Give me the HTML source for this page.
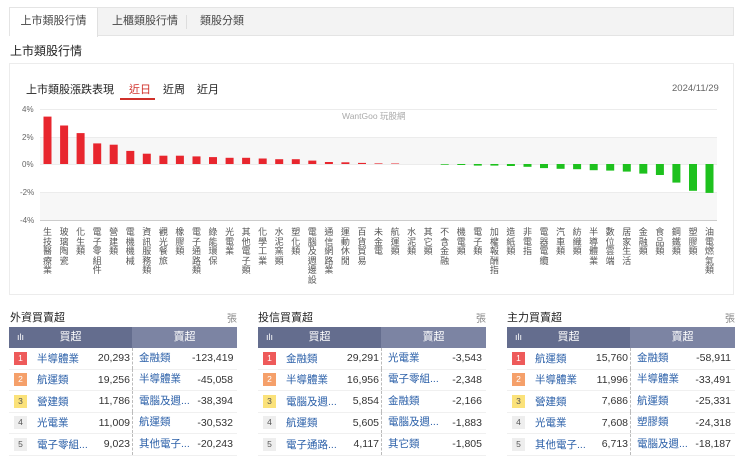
<!DOCTYPE html>
<html><head><meta charset="utf-8"><style>
*{margin:0;padding:0;box-sizing:border-box}
body{width:740px;height:463px;background:#fff;font-family:"Liberation Sans","Noto Sans CJK TC",sans-serif;color:#333;position:relative;overflow:hidden}
.abs{position:absolute}
.tabs{left:9px;top:7px;width:725px;height:29px;background:#f3f3f3;border:1px solid #e4e4e4}
.tab{position:absolute;top:0;height:28px;line-height:26px;font-size:11px;color:#444}
.t1{left:0;width:88px;background:#fff;border-right:1px solid #e0e0e0;height:29px;text-align:center}
.h1{left:10px;top:42px;font-size:12px;color:#222}
.panel{left:9px;top:63px;width:725px;height:232px;border:1px solid #ececec}
.lbl{position:absolute;top:228px;width:11px;font-size:9px;line-height:9.6px;color:#555;word-break:break-all;text-align:center}
.tt{font-size:11px;color:#222}
.tbl{position:absolute;top:327px;width:228px}
.tbl .hd{height:21px;display:flex;color:#fff;font-size:11px}
.hd .a{background:#646d8e;width:123px;text-align:center;line-height:21px;position:relative}
.hd .b{background:#7c84a3;flex:1;text-align:center;line-height:21px}
.row{height:21.5px;display:flex;align-items:center;border-bottom:1px solid #f0f0f0;font-size:10.5px}
.bd{width:13px;height:13px;font-size:8.5px;line-height:13px;text-align:center;margin-left:5px;color:#fff;flex:none}
.n1{color:#2a5fa8;margin-left:10px;width:52px;white-space:nowrap;overflow:hidden;flex:none}
.v1{width:41px;text-align:right;color:#333;flex:none}
.n2{color:#2a5fa8;margin-left:2px;width:60px;white-space:nowrap;overflow:hidden;border-left:1px dashed #bbb;padding-left:6px;height:21px;line-height:21px;flex:none}
.v2{flex:1;text-align:right;padding-right:4px;color:#333;white-space:nowrap}
.ttl{position:absolute;top:309px;font-size:11px;color:#222}
.zh{position:absolute;top:310px;font-size:10px;color:#888}
</style></head><body>
<div class="abs tabs">
<div class="tab t1">上市類股行情</div>
<div class="tab" style="left:102px">上櫃類股行情</div>
<div class="tab" style="left:176px;top:7px;height:14px;border-left:1px solid #ddd"></div>
<div class="tab" style="left:190px">類股分類</div>
</div>
<div class="abs h1">上市類股行情</div>
<div class="abs panel"></div>
<div class="abs tt" style="left:26px;top:81px">上市類股漲跌表現</div>
<div class="abs tt" style="left:129px;top:81px;color:#d0302a">近日</div>
<div class="abs" style="left:120px;top:98px;width:35px;height:2px;background:#d0302a"></div>
<div class="abs tt" style="left:163px;top:81px">近周</div>
<div class="abs tt" style="left:197px;top:81px">近月</div>
<div class="abs" style="left:672px;top:83px;font-size:9.5px;color:#666">2024/11/29</div>
<svg class="abs" style="left:0;top:0" width="740" height="300">
<rect x="40" y="137" width="677" height="27" fill="#f7f7f7"/>
<rect x="40" y="192" width="677" height="28" fill="#f7f7f7"/>
<g stroke="#ececec" stroke-width="1">
<line x1="40" y1="109.5" x2="717" y2="109.5"/><line x1="40" y1="137.5" x2="717" y2="137.5"/><line x1="40" y1="164.5" x2="717" y2="164.5"/><line x1="40" y1="192.5" x2="717" y2="192.5"/></g>
<line x1="40" y1="220.5" x2="717" y2="220.5" stroke="#ccc"/>
<g font-size="8" fill="#666" font-family="Liberation Sans">
<text x="22" y="112">4%</text><text x="22" y="140">2%</text><text x="22" y="167">0%</text><text x="20" y="195">-2%</text><text x="20" y="223">-4%</text></g>
<text x="342" y="119" font-size="8.5" fill="#aaa" font-family="Liberation Sans,Noto Sans CJK TC">WantGoo 玩股網</text>
<g fill="#e8262e">
<rect x="43.5" y="116.6" width="8" height="47.4"/>
<rect x="60.1" y="125.5" width="8" height="38.5"/>
<rect x="76.6" y="133.1" width="8" height="30.9"/>
<rect x="93.2" y="143.4" width="8" height="20.6"/>
<rect x="109.7" y="144.7" width="8" height="19.3"/>
<rect x="126.3" y="150.9" width="8" height="13.1"/>
<rect x="142.8" y="153.7" width="8" height="10.3"/>
<rect x="159.4" y="155.7" width="8" height="8.3"/>
<rect x="175.9" y="155.7" width="8" height="8.3"/>
<rect x="192.5" y="156.4" width="8" height="7.6"/>
<rect x="209" y="157.1" width="8" height="6.9"/>
<rect x="225.6" y="157.8" width="8" height="6.2"/>
<rect x="242.1" y="157.8" width="8" height="6.2"/>
<rect x="258.7" y="158.5" width="8" height="5.5"/>
<rect x="275.2" y="159.2" width="8" height="4.8"/>
<rect x="291.8" y="159.2" width="8" height="4.8"/>
<rect x="308.3" y="160.6" width="8" height="3.4"/>
<rect x="324.9" y="162" width="8" height="2"/>
<rect x="341.4" y="162.3" width="8" height="1.7"/>
<rect x="358" y="162.9" width="8" height="1.1"/>
<rect x="374.5" y="163.4" width="8" height="0.6"/>
<rect x="391.1" y="163.5" width="8" height="0.5"/>
</g>
<g fill="#1ec11e">
<rect x="440.7" y="164" width="8" height="0.7"/>
<rect x="457.3" y="164" width="8" height="1"/>
<rect x="473.8" y="164" width="8" height="1.6"/>
<rect x="490.4" y="164" width="8" height="1.6"/>
<rect x="506.9" y="164" width="8" height="2"/>
<rect x="523.5" y="164" width="8" height="2.8"/>
<rect x="540" y="164" width="8" height="4.1"/>
<rect x="556.6" y="164" width="8" height="4.8"/>
<rect x="573.1" y="164" width="8" height="5.2"/>
<rect x="589.7" y="164" width="8" height="6.2"/>
<rect x="606.2" y="164" width="8" height="6.6"/>
<rect x="622.8" y="164" width="8" height="7.6"/>
<rect x="639.3" y="164" width="8" height="9.6"/>
<rect x="655.9" y="164" width="8" height="11"/>
<rect x="672.4" y="164" width="8" height="18.6"/>
<rect x="689" y="164" width="8" height="26.8"/>
<rect x="705.5" y="164" width="8" height="28.9"/>
</g>
</svg>
<div class="abs" style="left:0;top:0">
<div class="lbl" style="left:42px">生技醫療業</div>
<div class="lbl" style="left:58.6px">玻璃陶瓷</div>
<div class="lbl" style="left:75.1px">化生類</div>
<div class="lbl" style="left:91.7px">電子零組件</div>
<div class="lbl" style="left:108.2px">營建類</div>
<div class="lbl" style="left:124.8px">電機機械</div>
<div class="lbl" style="left:141.3px">資訊服務類</div>
<div class="lbl" style="left:157.9px">觀光餐旅</div>
<div class="lbl" style="left:174.4px">橡膠類</div>
<div class="lbl" style="left:191px">電子通路類</div>
<div class="lbl" style="left:207.5px">綠能環保</div>
<div class="lbl" style="left:224.1px">光電業</div>
<div class="lbl" style="left:240.6px">其他電子類</div>
<div class="lbl" style="left:257.2px">化學工業</div>
<div class="lbl" style="left:273.7px">水泥窯類</div>
<div class="lbl" style="left:290.3px">塑化類</div>
<div class="lbl" style="left:306.8px">電腦及週邊設</div>
<div class="lbl" style="left:323.4px">通信網路業</div>
<div class="lbl" style="left:339.9px">運動休閒</div>
<div class="lbl" style="left:356.5px">百貨貿易</div>
<div class="lbl" style="left:373px">未金電</div>
<div class="lbl" style="left:389.6px">航運類</div>
<div class="lbl" style="left:406.1px">水泥類</div>
<div class="lbl" style="left:422.7px">其它類</div>
<div class="lbl" style="left:439.2px">不含金融</div>
<div class="lbl" style="left:455.8px">機電類</div>
<div class="lbl" style="left:472.3px">電子類</div>
<div class="lbl" style="left:488.9px">加權報酬指</div>
<div class="lbl" style="left:505.4px">造紙類</div>
<div class="lbl" style="left:522px">非電指</div>
<div class="lbl" style="left:538.5px">電器電纜</div>
<div class="lbl" style="left:555.1px">汽車類</div>
<div class="lbl" style="left:571.6px">紡織類</div>
<div class="lbl" style="left:588.2px">半導體業</div>
<div class="lbl" style="left:604.7px">數位雲端</div>
<div class="lbl" style="left:621.3px">居家生活</div>
<div class="lbl" style="left:637.8px">金融類</div>
<div class="lbl" style="left:654.4px">食品類</div>
<div class="lbl" style="left:670.9px">鋼鐵類</div>
<div class="lbl" style="left:687.5px">塑膠類</div>
<div class="lbl" style="left:704px">油電燃氣類</div>
</div>

<div class="ttl" style="left:10px">外資買賣超</div><div class="zh" style="left:227px">張</div>
<div class="ttl" style="left:258px">投信買賣超</div><div class="zh" style="left:476px">張</div>
<div class="ttl" style="left:507px">主力買賣超</div><div class="zh" style="left:725px">張</div>

<div class="tbl" style="left:9px">
<div class="hd"><div class="a"><span style="position:absolute;left:8px;font-size:9px">ılı</span>買超</div><div class="b">賣超</div></div>
<div class="row"><div class="bd" style="background:#ee5a5a">1</div><div class="n1">半導體業</div><div class="v1">20,293</div><div class="n2">金融類</div><div class="v2">-123,419</div></div>
<div class="row"><div class="bd" style="background:#f5a06a">2</div><div class="n1">航運類</div><div class="v1">19,256</div><div class="n2">半導體業</div><div class="v2">-45,058</div></div>
<div class="row"><div class="bd" style="background:#fbe27a;color:#555">3</div><div class="n1">營建類</div><div class="v1">11,786</div><div class="n2">電腦及週...</div><div class="v2">-38,394</div></div>
<div class="row"><div class="bd" style="background:#eee;color:#555">4</div><div class="n1">光電業</div><div class="v1">11,009</div><div class="n2">航運類</div><div class="v2">-30,532</div></div>
<div class="row"><div class="bd" style="background:#eee;color:#555">5</div><div class="n1">電子零組...</div><div class="v1">9,023</div><div class="n2">其他電子...</div><div class="v2">-20,243</div></div>
</div>

<div class="tbl" style="left:258px">
<div class="hd"><div class="a"><span style="position:absolute;left:8px;font-size:9px">ılı</span>買超</div><div class="b">賣超</div></div>
<div class="row"><div class="bd" style="background:#ee5a5a">1</div><div class="n1">金融類</div><div class="v1">29,291</div><div class="n2">光電業</div><div class="v2">-3,543</div></div>
<div class="row"><div class="bd" style="background:#f5a06a">2</div><div class="n1">半導體業</div><div class="v1">16,956</div><div class="n2">電子零組...</div><div class="v2">-2,348</div></div>
<div class="row"><div class="bd" style="background:#fbe27a;color:#555">3</div><div class="n1">電腦及週...</div><div class="v1">5,854</div><div class="n2">金融類</div><div class="v2">-2,166</div></div>
<div class="row"><div class="bd" style="background:#eee;color:#555">4</div><div class="n1">航運類</div><div class="v1">5,605</div><div class="n2">電腦及週...</div><div class="v2">-1,883</div></div>
<div class="row"><div class="bd" style="background:#eee;color:#555">5</div><div class="n1">電子通路...</div><div class="v1">4,117</div><div class="n2">其它類</div><div class="v2">-1,805</div></div>
</div>

<div class="tbl" style="left:507px">
<div class="hd"><div class="a"><span style="position:absolute;left:8px;font-size:9px">ılı</span>買超</div><div class="b">賣超</div></div>
<div class="row"><div class="bd" style="background:#ee5a5a">1</div><div class="n1">航運類</div><div class="v1">15,760</div><div class="n2">金融類</div><div class="v2">-58,911</div></div>
<div class="row"><div class="bd" style="background:#f5a06a">2</div><div class="n1">半導體業</div><div class="v1">11,996</div><div class="n2">半導體業</div><div class="v2">-33,491</div></div>
<div class="row"><div class="bd" style="background:#fbe27a;color:#555">3</div><div class="n1">營建類</div><div class="v1">7,686</div><div class="n2">航運類</div><div class="v2">-25,331</div></div>
<div class="row"><div class="bd" style="background:#eee;color:#555">4</div><div class="n1">光電業</div><div class="v1">7,608</div><div class="n2">塑膠類</div><div class="v2">-24,318</div></div>
<div class="row"><div class="bd" style="background:#eee;color:#555">5</div><div class="n1">其他電子...</div><div class="v1">6,713</div><div class="n2">電腦及週...</div><div class="v2">-18,187</div></div>
</div>
</body></html>
